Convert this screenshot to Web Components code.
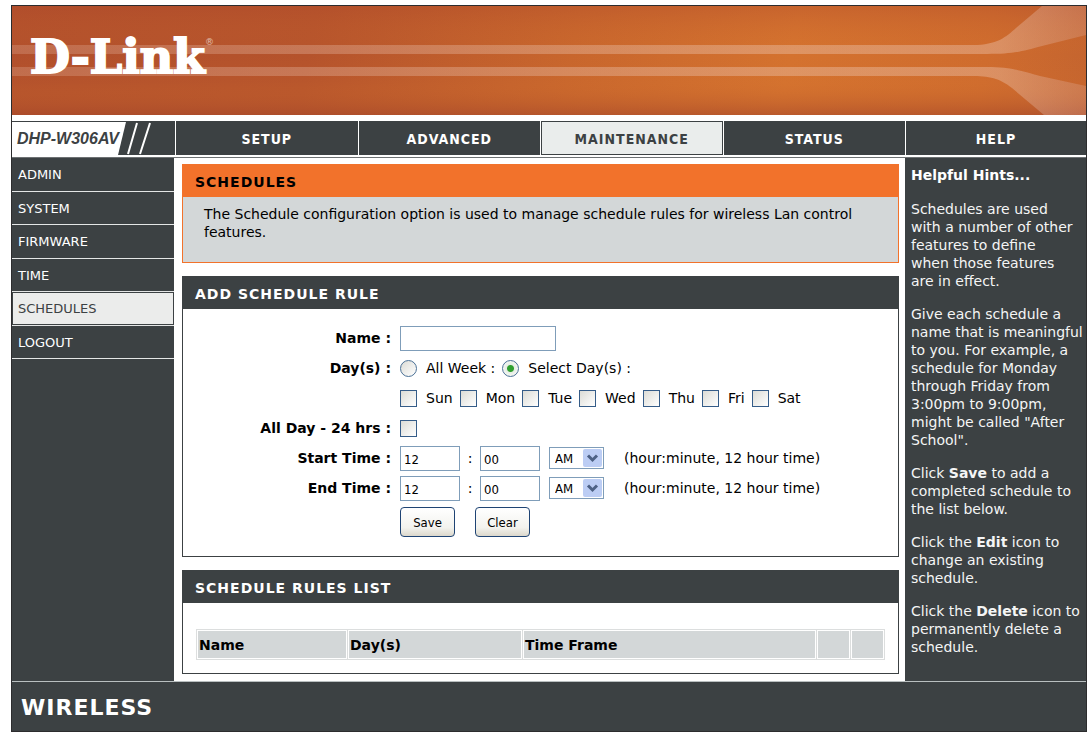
<!DOCTYPE html>
<html lang="en">
<head>
<meta charset="utf-8">
<meta name="viewport" content="width=device-width, initial-scale=1">
<title>D-Link DHP-W306AV - Schedules</title>
<style>
  :root {
    --dark: #3c4143;
    --orange: #f2722b;
    --grey: #d3d7d8;
    --field-line: #7f9db9;
    --narrow: "DejaVu Sans Condensed", "Noto Sans", sans-serif;
  }
  * { box-sizing: border-box; }
  body {
    margin: 0;
    background: #fff;
    color: #000;
    font: 14px/18px "DejaVu Sans", "Noto Sans", sans-serif;
  }
</style>
</head>
<body>
<router-page></router-page>

<template id="t-router-page">
  <style>
    :host { display: flex; min-height: 100vh; padding: 5px 3px 5px 11px; box-sizing: border-box; }
    .frame { flex: 1; display: flex; flex-direction: column; border: 1px solid #2c2c2e; min-width: 0; }
    .body { flex: 1; display: grid; grid-template-columns: 163px minmax(0, 1fr) 181px; border-top: 1px solid #6d7173; }
    main { display: flex; flex-direction: column; gap: 13px; padding: 6px 6px 6px 7px; }
    .intro { margin: 0; padding: 8px 21px 21px; }
  </style>
  <div class="frame">
    <brand-banner></brand-banner>
    <top-tabs></top-tabs>
    <div class="body">
      <side-menu></side-menu>
      <main>
        <info-panel kind="accent">
          <span slot="title">SCHEDULES</span>
          <p class="intro">The Schedule configuration option is used to manage schedule rules for wireless Lan control features.</p>
        </info-panel>
        <info-panel>
          <span slot="title">ADD SCHEDULE RULE</span>
          <schedule-form></schedule-form>
        </info-panel>
        <info-panel>
          <span slot="title">SCHEDULE RULES LIST</span>
          <rules-table></rules-table>
        </info-panel>
      </main>
      <help-hints>
        <span slot="title">Helpful Hints...</span>
        <p>Schedules are used<br>with a number of other features to define<br>when those features<br>are in effect.</p>
        <p>Give each schedule a<br>name that is meaningful<br>to you. For example, a<br>schedule for Monday<br>through Friday from<br>3:00pm to 9:00pm,<br>might be called "After<br>School".</p>
        <p>Click <b>Save</b> to add a<br>completed schedule to<br>the list below.</p>
        <p>Click the <b>Edit</b> icon to<br>change an existing<br>schedule.</p>
        <p>Click the <b>Delete</b> icon to<br>permanently delete a<br>schedule.</p>
      </help-hints>
    </div>
    <page-footer>WIRELESS</page-footer>
  </div>
</template>

<template id="t-brand-banner">
  <style>
    :host { display: grid; height: 109px; margin-bottom: 6px; overflow: hidden;
      background: linear-gradient(100deg, #b14f2c 0%, #b5532c 28%, #c8662d 52%, #d4722f 72%, #cf6c2e 90%, #c4642f 100%); }
    svg, .logo { grid-area: 1 / 1; }
    svg { width: 100%; height: 109px; display: block; }
    .logo { justify-self: start; align-self: start; display: flex; color: #fff; text-decoration: none;
      padding: 22px 0 0 18px; font: bold 46px/58px "DejaVu Serif", serif; -webkit-text-stroke: 2px #fff; }
    sup { font: 9px/12px "DejaVu Sans", sans-serif; -webkit-text-stroke: 0; padding-top: 8px; opacity: .6; }
  </style>
  <svg viewBox="0 0 1074 109" preserveAspectRatio="none" aria-hidden="true">
    <defs>
      <linearGradient id="shade" x1="0" y1="0" x2="0" y2="1">
        <stop offset="0" stop-color="#b04a2a" stop-opacity=".35"/>
        <stop offset=".45" stop-color="#d8742c" stop-opacity="0"/>
        <stop offset=".7" stop-color="#d8742c" stop-opacity=".1"/>
        <stop offset="1" stop-color="#a8492a" stop-opacity=".6"/>
      </linearGradient>
      <linearGradient id="band" x1="0" y1="0" x2="1074" y2="0" gradientUnits="userSpaceOnUse">
        <stop offset="0" stop-color="#f0cfc0" stop-opacity=".22"/>
        <stop offset=".25" stop-color="#f0cfc0" stop-opacity=".28"/>
        <stop offset=".7" stop-color="#f0d0c0" stop-opacity=".36"/>
        <stop offset=".92" stop-color="#f0d0c0" stop-opacity=".36"/>
        <stop offset="1" stop-color="#e0b8b0" stop-opacity=".24"/>
      </linearGradient>
    </defs>
    <rect width="1074" height="109" fill="url(#shade)"/>
    <path fill="url(#band)" d="M0 39H961C985 39 994 31 1004 22L1030 0H1074V29L1030 40C1008 46 1000 48 975 48H0Z"/>
    <path fill="url(#band)" d="M0 61H975C1000 61 1014 66 1028 70L1074 80V109H1032L1000 82C987 72 978 70 958 70H0Z"/>
  </svg>
  <a class="logo" href="#home">D-Link<sup>®</sup></a>
</template>

<template id="t-top-tabs">
  <style>
    :host { display: grid; grid-template-columns: 163px repeat(4, minmax(0, 1fr)) 181px; height: 36px;
      background: var(--dark); border-bottom: 2px solid #fff; }
    .model { display: grid; }
    .model svg { grid-area: 1 / 1; height: 34px; width: 162px; display: block; }
    .model span { grid-area: 1 / 1; align-self: center; padding: 2px 0 0 5px; z-index: 1;
      color: var(--dark); font: italic bold 16px/20px "Liberation Sans", Arial, sans-serif; }
    a { border-left: 1px solid #fff; display: grid; color: #fff; text-decoration: none;
      font-weight: bold; font-family: var(--narrow); letter-spacing: 1px; padding: 1px; }
    a span { display: grid; place-items: center; padding-top: 2px; }
    a[aria-current] span { background: #eaedec; color: var(--dark); }
  </style>
  <div class="model">
    <svg viewBox="0 0 162 34" aria-hidden="true">
      <path fill="#fff" d="M0 1H114L106 34H0Z"/>
      <path stroke="#fff" stroke-width="2" d="M125 2L116 33M138 2L128 33"/>
    </svg>
    <span>DHP-W306AV</span>
  </div>
  <a href="#setup"><span>SETUP</span></a>
  <a href="#advanced"><span>ADVANCED</span></a>
  <a href="#maintenance" aria-current="page"><span>MAINTENANCE</span></a>
  <a href="#status"><span>STATUS</span></a>
  <a href="#help"><span>HELP</span></a>
</template>

<template id="t-side-menu">
  <style>
    :host { display: block; background: var(--dark); border-right: 1px solid #fff; }
    nav { display: grid; grid-auto-rows: 1fr; height: 201px; }
    a { display: flex; align-items: center; padding: 2px 0 0 6px; color: #fff; text-decoration: none;
      font-size: 13px; border-bottom: 1px solid #e4e6e6; }
    a[aria-current] { color: var(--dark); background: #ebeceb; box-shadow: inset 0 0 0 1px var(--dark); }
  </style>
  <nav aria-label="Maintenance">
    <a href="#admin">ADMIN</a>
    <a href="#system">SYSTEM</a>
    <a href="#firmware">FIRMWARE</a>
    <a href="#time">TIME</a>
    <a href="#schedules" aria-current="page">SCHEDULES</a>
    <a href="#logout">LOGOUT</a>
  </nav>
</template>

<template id="t-info-panel">
  <style>
    :host { display: block; border: 1px solid var(--dark); --bar: var(--dark); background: #fff; }
    :host([kind="accent"]) { border-color: var(--orange); --bar: var(--orange); background: var(--grey); }
    h2 { margin: 0; padding: 8px 12px 6px; background: var(--bar); color: #fff;
      font-size: 14px; line-height: 18px; letter-spacing: 1px; }
    :host([kind="accent"]) h2 { color: #000; }
  </style>
  <h2><slot name="title"></slot></h2>
  <slot></slot>
</template>

<template id="t-schedule-form">
  <style>
    :host { display: block; }
    form { padding: 14px 12px 23px; display: grid; grid-auto-rows: 30px; }
    .row { display: grid; grid-template-columns: 196px minmax(0, 1fr); column-gap: 9px; align-items: center; }
    .cap { font-weight: bold; text-align: right; }
    .set { display: flex; align-items: center; }
    .item { display: flex; align-items: center; gap: 9px; margin-right: 7px; white-space: nowrap; }
    input, select, button { box-sizing: border-box; margin: 0; font-family: var(--narrow); font-size: 13px; color: #000; }
    input[type="text"], select { border: 1px solid var(--field-line); border-radius: 0; background: #fff; }
    input[type="text"] { height: 25px; padding: 2px 3px 0; width: 60px; }
    #name { width: 156px; }
    input[type="checkbox"], input[type="radio"] { appearance: none; width: 17px; height: 17px; flex: none;
      border: 1px solid #355c88; background: linear-gradient(135deg, #dcdcd6, #fff); }
    input[type="radio"] { border-radius: 50%; border-color: #4b7196; }
    input[type="radio"]:checked { background: radial-gradient(circle, #2fa02f 0 3px, #e6ede4 4px, #f6f8f5 8px); }
    .colon { width: 20px; text-align: center; }
    .pick { display: grid; margin: 0 20px 0 9px; }
    .pick select, .pick svg { grid-area: 1 / 1; }
    select { appearance: none; width: 55px; height: 22px; padding: 0 0 0 5px; }
    .pick svg { justify-self: end; align-self: center; margin-right: 2px; width: 19px; height: 18px; pointer-events: none; }
    .acts { gap: 20px; }
    .row.last { height: 34px; align-items: end; }
    button { height: 30px; min-width: 55px; border: 1px solid #1f4474; border-radius: 4px; padding: 0;
      background: linear-gradient(#fff, #f3f3ee 70%, #dcd8cc); }
  </style>
  <form>
    <div class="row"><label class="cap" for="name">Name :</label><div class="set"><input type="text" id="name"></div></div>
    <div class="row" role="radiogroup" aria-labelledby="days"><span class="cap" id="days">Day(s) :</span>
      <div class="set">
        <label class="item"><input type="radio" name="days">All Week :</label>
        <label class="item"><input type="radio" name="days" checked>Select Day(s) :</label>
      </div></div>
    <div class="row"><span></span>
      <div class="set">
        <label class="item"><input type="checkbox">Sun</label>
        <label class="item"><input type="checkbox">Mon</label>
        <label class="item"><input type="checkbox">Tue</label>
        <label class="item"><input type="checkbox">Wed</label>
        <label class="item"><input type="checkbox">Thu</label>
        <label class="item"><input type="checkbox">Fri</label>
        <label class="item"><input type="checkbox">Sat</label>
      </div></div>
    <div class="row"><label class="cap" for="allday">All Day - 24 hrs :</label><div class="set"><input type="checkbox" id="allday"></div></div>
    <div class="row"><label class="cap" for="sh">Start Time :</label>
      <div class="set">
        <input type="text" id="sh" value="12"><span class="colon">:</span><input type="text" value="00" aria-label="Start minute">
        <div class="pick"><select aria-label="Start AM or PM"><option>AM</option><option>PM</option></select>
          <svg viewBox="0 0 19 18" aria-hidden="true"><rect width="19" height="18" rx="2" fill="#bccdf4"/><path d="M5 6.500L9.500 11L14 6.500" fill="none" stroke="#4d6185" stroke-width="3"/></svg></div>
        <span>(hour:minute, 12 hour time)</span>
      </div></div>
    <div class="row"><label class="cap" for="eh">End Time :</label>
      <div class="set">
        <input type="text" id="eh" value="12"><span class="colon">:</span><input type="text" value="00" aria-label="End minute">
        <div class="pick"><select aria-label="End AM or PM"><option>AM</option><option>PM</option></select>
          <svg viewBox="0 0 19 18" aria-hidden="true"><rect width="19" height="18" rx="2" fill="#bccdf4"/><path d="M5 6.500L9.500 11L14 6.500" fill="none" stroke="#4d6185" stroke-width="3"/></svg></div>
        <span>(hour:minute, 12 hour time)</span>
      </div></div>
    <div class="row last"><span></span><div class="set acts"><button type="button">Save</button><button type="reset">Clear</button></div></div>
  </form>
</template>

<template id="t-rules-table">
  <style>
    :host { display: block; padding: 26px 13px 13px; }
    table { width: 100%; border-collapse: collapse; table-layout: fixed; }
    th { height: 30px; box-sizing: border-box; padding: 0 2px; text-align: left; background: var(--grey);
      border: 1px solid #dcdede; box-shadow: inset 0 0 0 1px #fff; }
    .n { width: 151px; } .d { width: 175px; } .i { width: 34px; }
  </style>
  <table>
    <thead><tr>
      <th class="n" scope="col">Name</th><th class="d" scope="col">Day(s)</th><th scope="col">Time Frame</th>
      <th class="i" scope="col" aria-label="Edit"></th><th class="i" scope="col" aria-label="Delete"></th>
    </tr></thead>
  </table>
</template>

<template id="t-help-hints">
  <style>
    :host { display: block; background: var(--dark); color: #f4f5f5; padding: 8px 0 6px 6px; }
    h2 { margin: 0 0 16px; font-size: 14px; line-height: 18px; color: #fff; }
    ::slotted(p) { margin: 0 0 15px; }
  </style>
  <h2><slot name="title"></slot></h2>
  <slot></slot>
</template>

<template id="t-page-footer">
  <style>
    :host { display: flex; align-items: center; height: 50px; padding: 2px 9px 0; background: var(--dark); color: #fff;
      border-top: 1px solid #b9bfc0; box-sizing: border-box; font: bold 22px/26px "DejaVu Sans", sans-serif; letter-spacing: 1px; }
  </style>
  <slot></slot>
</template>

<script>
  const define = (name) => {
    customElements.define(name, class extends HTMLElement {
      constructor() {
        super();
        this.attachShadow({ mode: "open" })
          .append(document.getElementById("t-" + name).content.cloneNode(true));
        const base = document.createElement("style");
        base.textContent = ":host, * { box-sizing: border-box; }";
        this.shadowRoot.prepend(base);
      }
    });
  };
  ["brand-banner", "top-tabs", "side-menu", "info-panel", "schedule-form",
   "rules-table", "help-hints", "page-footer", "router-page"].forEach(define);
</script>
</body>
</html>
